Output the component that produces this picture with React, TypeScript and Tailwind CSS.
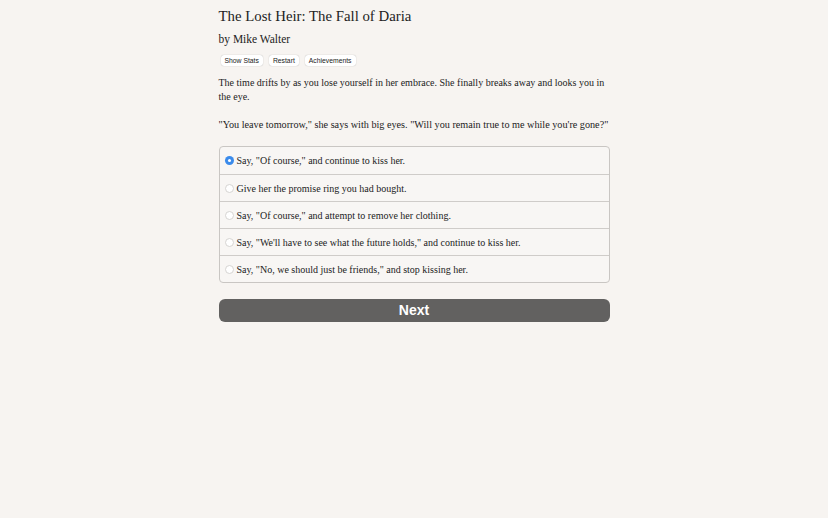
const choices = [
  'Say, "Of course," and continue to kiss her.',
  'Give her the promise ring you had bought.',
  'Say, "Of course," and attempt to remove her clothing.',
  'Say, "We\'ll have to see what the future holds," and continue to kiss her.',
  'Say, "No, we should just be friends," and stop kissing her.',
]

export default function App() {
  return (
    <div className="min-h-[518px] bg-[#f7f4f1] text-[#222] [font-family:'Liberation_Serif',serif]">
      <div className="mx-auto w-[391px] pt-[7px]">
        <h1 className="text-[14.8px] leading-[18px]">The Lost Heir: The Fall of Daria</h1>
        <p className="mt-[7px] text-[11.5px] leading-[14px]">by Mike Walter</p>

        <div className="mt-[9px] flex gap-[6px] pl-[2px] [font-family:'Liberation_Sans',sans-serif]">
          {['Show Stats', 'Restart', 'Achievements'].map((b) => (
            <button
              key={b}
              type="button"
              className="rounded-[3px] bg-white px-[4px] text-[6.8px] leading-[11px] text-[#222] shadow-[0_0_1px_rgba(0,0,0,0.35)]"
            >
              {b}
            </button>
          ))}
        </div>

        <p className="mt-[10px] text-[10px] leading-[14px]">
          The time drifts by as you lose yourself in her embrace. She finally breaks away and looks you in the eye.
        </p>
        <p className="mt-[14px] text-[10.2px] leading-[14px]">
          "You leave tomorrow," she says with big eyes. "Will you remain true to me while you're gone?"
        </p>

        <div className="mt-[14px] overflow-hidden rounded-[4px] border border-[#c9c6c3] bg-[#f8f6f4]">
          {choices.map((c, i) => (
            <label
              key={c}
              className={`flex h-[27px] items-center gap-[3px] px-[5px] text-[10px] ${i > 0 ? 'border-t border-[#cfccc9]' : ''}`}
            >
              {i === 0 ? (
                <span className="flex h-[9px] w-[9px] items-center justify-center rounded-full bg-[#3b8beb]">
                  <span className="h-[3px] w-[3px] rounded-full bg-white" />
                </span>
              ) : (
                <span className="h-[9px] w-[9px] rounded-full border border-[#d6d4d2] bg-white" />
              )}
              <span>{c}</span>
            </label>
          ))}
        </div>

        <button
          type="button"
          className="mt-[16px] h-[23px] w-full rounded-[6px] bg-[#626160] text-[14px] font-bold text-white [font-family:'Liberation_Sans',sans-serif]"
        >
          Next
        </button>
      </div>
    </div>
  )
}
